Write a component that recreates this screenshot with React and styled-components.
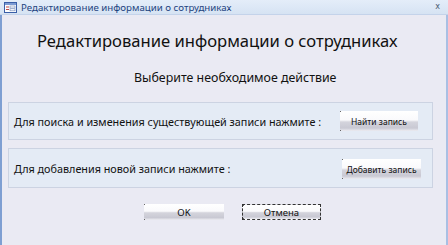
import React from "react";
import styled, { createGlobalStyle } from "styled-components";

const Global = createGlobalStyle`
  html, body { margin: 0; padding: 0; background: #e9e9f2; }
  body { font-family: "Noto Sans", "DejaVu Sans", sans-serif; }
`;

const Window = styled.div`
  width: 448px;
  height: 245px;
  display: flex;
  flex-direction: column;
  overflow: hidden;
  background: #eaeaf3;
`;

const TitleBar = styled.div`
  height: 15px;
  display: flex;
  align-items: center;
  padding: 0 8px 0 4px;
  gap: 4px;
  background: linear-gradient(#e4edf9, #d6e3f3);
  border-bottom: 1px solid #c4d3ea;
  box-sizing: border-box;
`;

const TitleText = styled.span`
  flex: 1;
  font-family: "Noto Sans", sans-serif;
  font-size: 9.7px;
  color: #1d4380;
  white-space: nowrap;
`;

const Close = styled.span`
  font-family: "DejaVu Sans", sans-serif;
  font-size: 8px;
  color: #4a5a70;
  line-height: 1;
`;

const Body = styled.div`
  flex: 1;
  display: flex;
  flex-direction: column;
  border-left: 2px solid #7f9fd2;
  border-right: 2px solid #a9bfe3;
  padding: 0 13px 0 6px;
  background: #eaeaf3;
`;

const Heading = styled.h1`
  margin: 16px 0 0 29px;
  font-family: "Noto Sans", sans-serif;
  font-weight: normal;
  font-size: 16.6px;
  line-height: 20px;
  color: #111;
  white-space: nowrap;
`;

const Sub = styled.h2`
  margin: 20px 0 0 126px;
  font-family: "Noto Sans", sans-serif;
  font-weight: normal;
  font-size: 12.4px;
  line-height: 14px;
  color: #111;
  white-space: nowrap;
`;

const Panel = styled.div`
  margin-top: ${(p) => p.$top}px;
  height: ${(p) => p.$h}px;
  box-sizing: border-box;
  display: flex;
  align-items: center;
  justify-content: space-between;
  padding: 0 ${(p) => p.$pr}px 0 5px;
  background: #e4ebf5;
  border: 1px solid #ccd3e2;
`;

const PanelText = styled.span`
  font-family: "Noto Sans", sans-serif;
  font-size: 10.8px;
  color: #111;
  white-space: nowrap;
`;

const Btn = styled.button`
  position: relative;
  width: ${(p) => p.$w}px;
  height: ${(p) => p.$h}px;
  padding: 0;
  margin-top: ${(p) => p.$dy || 0}px;
  border: ${(p) => (p.$focus ? "1px dashed #333" : "none")};
  background: linear-gradient(#ffffff 0%, #fafafc 45%, #d4d4dc 55%, #c9c9d3 85%, #ececf2 100%);
  font-family: "Noto Sans", sans-serif;
  font-size: ${(p) => p.$fs}px;
  color: #111;
  box-sizing: border-box;
  &::before, &::after {
    content: "";
    position: absolute;
    width: 1px;
    height: 1px;
    background: #666;
  }
  &::before { left: 0; top: 0; }
  &::after { left: 0; bottom: 0; }
`;

const BottomRow = styled.div`
  display: flex;
  gap: 18px;
  margin: 16px 0 0 136px;
`;

const FormIcon = () => (
  <svg width="13" height="11" viewBox="0 0 13 11">
    <rect x="0.5" y="0.5" width="12" height="10" fill="#fff" stroke="#3a5fa8" />
    <rect x="1" y="1" width="11" height="2" fill="#7c9bd3" />
    <rect x="2" y="4.5" width="3" height="1" fill="#c04848" />
    <rect x="2" y="7" width="3" height="1" fill="#c04848" />
    <rect x="6" y="4" width="5" height="2" fill="#fff" stroke="#6c84b6" strokeWidth="0.6" />
    <rect x="6" y="6.8" width="5" height="2" fill="#fff" stroke="#6c84b6" strokeWidth="0.6" />
  </svg>
);

export default function App() {
  return (
    <>
      <Global />
      <Window>
        <TitleBar>
          <FormIcon />
          <TitleText>Редактирование информации о сотрудниках</TitleText>
          <Close>x</Close>
        </TitleBar>
        <Body>
          <Heading>Редактирование информации о сотрудниках</Heading>
          <Sub>Выберите необходимое действие</Sub>
          <Panel $top={17} $h={38} $pr={14}>
            <PanelText>Для поиска и изменения существующей записи нажмите :</PanelText>
            <Btn $w={78} $h={20} $fs={8.5}>Найти запись</Btn>
          </Panel>
          <Panel $top={8} $h={40} $pr={11}>
            <PanelText>Для добавления новой записи нажмите :</PanelText>
            <Btn $w={79} $h={20} $fs={8.5} $dy={2}>Добавить запись</Btn>
          </Panel>
          <BottomRow>
            <Btn $w={80} $h={16} $fs={9.5}>OK</Btn>
            <Btn $w={79} $h={16} $fs={9.5} $focus>Отмена</Btn>
          </BottomRow>
        </Body>
      </Window>
    </>
  );
}
